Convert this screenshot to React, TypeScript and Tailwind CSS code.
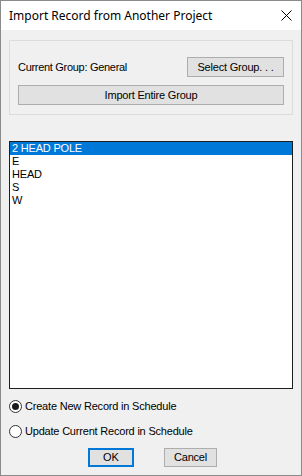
import React from "react";

const items = ["2 HEAD POLE", "E", "HEAD", "S", "W"];

function Radio({ checked, label }: { checked: boolean; label: string }) {
  return (
    <div className="flex items-center h-[17px]">
      <div className="w-[13px] h-[13px] rounded-full border border-[#333333] bg-white flex items-center justify-center">
        {checked && <div className="w-[7px] h-[7px] rounded-full bg-[#1a1a1a]" />}
      </div>
      <span className="ml-[3px] text-[11px] leading-[13px] tracking-[-0.2px] text-black">{label}</span>
    </div>
  );
}

export default function App() {
  return (
    <div
      className="w-[302px] h-[476px] border border-[#8a8a8a] bg-[#f0f0f0] flex flex-col"
      style={{ fontFamily: '"Liberation Sans", Arial, sans-serif' }}
    >
      <div className="h-[29px] bg-white flex items-center justify-between pl-[8px] pr-[9px] shrink-0">
        <span className="text-[12px] text-black" style={{ fontFamily: '"Noto Sans", "Liberation Sans", sans-serif' }}>
          Import Record from Another Project
        </span>
        <svg width="11" height="11" viewBox="0 0 11 11" className="mb-[1px]">
          <path d="M0.5 0.5 L10.5 10.5 M10.5 0.5 L0.5 10.5" stroke="#000" strokeWidth="1" fill="none" />
        </svg>
      </div>

      <div className="flex flex-col px-[8px] pt-[10px]">
        <div className="h-[75px] border border-[#dcdcdc] flex flex-col pt-[16px] pl-[8px] pr-[8px]">
          <div className="flex items-center justify-between h-[20px]">
            <span className="text-[11px] tracking-[-0.3px] text-black">Current Group: General</span>
            <div className="w-[97px] h-[20px] bg-[#e1e1e1] border border-[#adadad] flex items-center justify-center text-[11px] tracking-[-0.2px] text-black">
              Select Group. . .
            </div>
          </div>
          <div className="mt-[8px] h-[20px] bg-[#e1e1e1] border border-[#adadad] flex items-center justify-center text-[11px] tracking-[-0.2px] text-black">
            Import Entire Group
          </div>
        </div>

        <div className="mt-[26px] h-[248px] border border-[#1e1e1e] bg-white flex flex-col">
          {items.map((it, i) => (
            <div
              key={it}
              className={
                i === 0
                  ? "h-[13px] bg-[#0078d7] text-white text-[11px] leading-[13px] tracking-[-0.2px] pl-[2px]"
                  : "h-[13px] text-black text-[11px] leading-[13px] tracking-[-0.2px] pl-[2px]"
              }
            >
              {it}
            </div>
          ))}
        </div>

        <div className="mt-[9px] flex flex-col gap-[8px]">
          <Radio checked label="Create New Record in Schedule" />
          <Radio checked={false} label="Update Current Record in Schedule" />
        </div>

        <div className="mt-[8px] flex pl-[79px] gap-[30px]">
          <div className="w-[46px] h-[19px] bg-[#e1e1e1] border-2 border-[#0078d7] flex items-center justify-center text-[11px] text-black">
            OK
          </div>
          <div className="w-[53px] h-[19px] bg-[#e1e1e1] border border-[#adadad] flex items-center justify-center text-[11px] tracking-[-0.2px] text-black">
            Cancel
          </div>
        </div>
      </div>
    </div>
  );
}
